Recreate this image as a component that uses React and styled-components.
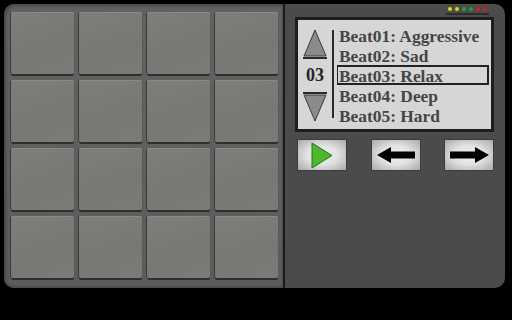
import React from 'react';
import styled, { createGlobalStyle } from 'styled-components';

const Global = createGlobalStyle`
    html, body {
        margin: 0;
        padding: 0;
        background: #000;
    }
    body {
        width: 512px;
        height: 320px;
        overflow: hidden;
    }
`;

const Screen = styled.div`
    width: 512px;
    height: 320px;
    padding: 4px 7px 0 4px;
    box-sizing: border-box;
    background: #000;
`;

const Device = styled.div`
    display: flex;
    height: 284px;
`;

const PadPanel = styled.div`
    width: 279px;
    box-sizing: border-box;
    padding: 8px 0 0 7px;
    border-radius: 10px 0 0 10px;
    background: linear-gradient(180deg, #626262 0%, #5c5c5c 100%);
    box-shadow: inset 2px 2px 3px #474747, inset -1px -2px 2px #4c4c4c;
`;

const PadGrid = styled.div`
    display: grid;
    grid-template-columns: repeat(4, 63px);
    grid-template-rows: repeat(4, 62px);
    column-gap: 5px;
    row-gap: 6px;
`;

const Pad = styled.div`
    border-radius: 2px;
    background: linear-gradient(160deg, #7e7f7a 0%, #777873 60%, #7b7c77 100%);
    box-shadow: -1px 0 0 #3a3a3a, 0 2px 0 #2f2f2f, 1px 1px 0 #5a5a5a, inset 0 1px 0 #8a8b86;
`;

const Divider = styled.div`
    width: 2px;
    background: #1a1a1a;
`;

const ControlPanel = styled.div`
    flex: 1;
    display: flex;
    flex-direction: column;
    padding: 2px 11px 0 10px;
    border-radius: 0 10px 10px 0;
    background: #4b4b4b;
`;

const LedRow = styled.div`
    align-self: flex-end;
    display: flex;
    gap: 3px;
    padding: 0 2px 1px 2px;
    margin-right: 5px;
    height: 6px;
    border-bottom: 2px solid #2c2c2c;
`;

const Led = styled.span`
    width: 4px;
    height: 4px;
    margin-top: 1px;
    border-radius: 50%;
    background: ${p => p.color};
`;

const Display = styled.div`
    margin-top: 2px;
    height: 115px;
    box-sizing: border-box;
    border: 3px solid #1d1d1d;
    background: #d6d6d6;
    display: flex;
    padding: 5px 0 0 5px;
`;

const Selector = styled.div`
    width: 24px;
    display: flex;
    flex-direction: column;
    align-items: center;
    padding-top: 4px;
`;

const Rule = styled.div`
    width: 24px;
    height: 2px;
    background: #2a2a2a;
`;

const Counter = styled.div`
    height: 33px;
    line-height: 33px;
    font-family: "Liberation Serif", "Times New Roman", serif;
    font-weight: bold;
    font-size: 18px;
    color: #262626;
`;

const VLine = styled.div`
    width: 2px;
    height: 88px;
    margin: 5px 3px 0 5px;
    background: #2a2a2a;
`;

const List = styled.div`
    flex: 1;
    display: flex;
    flex-direction: column;
    margin-right: 2px;
`;

const Item = styled.div`
    height: 20px;
    box-sizing: border-box;
    padding-left: 1px;
    line-height: 18px;
    border: 2px solid ${p => (p.selected ? '#222' : 'transparent')};
    border-left-width: 1px;
    font-family: "Liberation Serif", "Times New Roman", serif;
    font-weight: bold;
    font-size: 17.4px;
    color: #454545;
    white-space: nowrap;
`;

const Buttons = styled.div`
    display: flex;
    justify-content: space-between;
    margin: 7px 0 0 2px;
`;

const Button = styled.div`
    width: 50px;
    height: 32px;
    box-sizing: border-box;
    border: 1px solid #3c3c3c;
    background: radial-gradient(ellipse at center, #f2f2f2 0%, #e2e2e2 45%, #a9a9a9 100%);
    display: flex;
    align-items: center;
    justify-content: ${p => p.align || 'center'};
    padding-left: ${p => p.inset || 0}px;
`;

const beats = ['Beat01: Aggressive', 'Beat02: Sad', 'Beat03: Relax', 'Beat04: Deep', 'Beat05: Hard'];
const leds = ['#e6d21a', '#e6d21a', '#1aa83a', '#1aa83a', '#d81c1c', '#d81c1c'];

export default function App() {
    return (
        <Screen>
            <Global />
            <Device>
                <PadPanel>
                    <PadGrid>
                        {Array.from({ length: 16 }).map((_, i) => <Pad key={i} />)}
                    </PadGrid>
                </PadPanel>
                <Divider />
                <ControlPanel>
                    <LedRow>
                        {leds.map((c, i) => <Led key={i} color={c} />)}
                    </LedRow>
                    <Display>
                        <Selector>
                            <svg width="24" height="28" viewBox="0 0 24 28">
                                <polygon points="12,1 23,27 1,27" fill="#8a8a8a" stroke="#3a3a3a" strokeWidth="1" />
                            </svg>
                            <Rule />
                            <Counter>03</Counter>
                            <Rule />
                            <svg width="24" height="28" viewBox="0 0 24 28">
                                <polygon points="1,1 23,1 12,27" fill="#8a8a8a" stroke="#3a3a3a" strokeWidth="1" />
                            </svg>
                        </Selector>
                        <VLine />
                        <List>
                            {beats.map((b, i) => (
                                <Item key={b} selected={i === 2}>{b}</Item>
                            ))}
                        </List>
                    </Display>
                    <Buttons>
                        <Button align="flex-start" inset={13}>
                            <svg width="22" height="27" viewBox="0 0 22 27">
                                <polygon points="1,1 21,13.5 1,26" fill="#4cb82a" stroke="#2d6e1c" strokeWidth="1" />
                            </svg>
                        </Button>
                        <Button>
                            <svg width="38" height="16" viewBox="0 0 38 16">
                                <polygon points="0,8 14,0 14,4.5 38,4.5 38,11.5 14,11.5 14,16" fill="#000" />
                            </svg>
                        </Button>
                        <Button>
                            <svg width="39" height="16" viewBox="0 0 39 16">
                                <polygon points="39,8 25,0 25,4.5 0,4.5 0,11.5 25,11.5 25,16" fill="#000" />
                            </svg>
                        </Button>
                    </Buttons>
                </ControlPanel>
            </Device>
        </Screen>
    );
}
